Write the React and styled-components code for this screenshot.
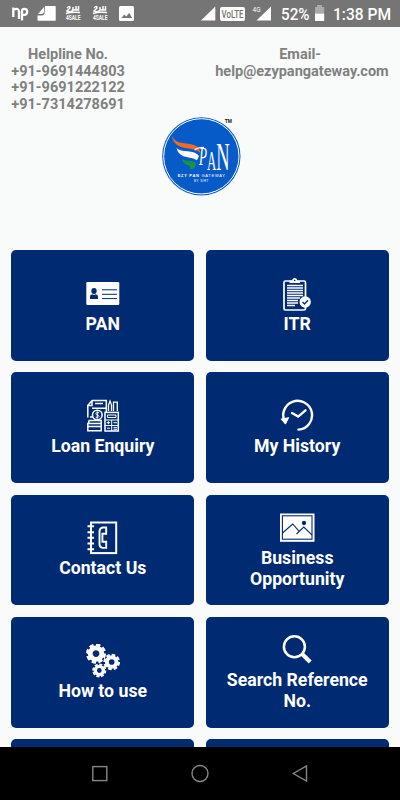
import styled, { createGlobalStyle } from 'styled-components'

const GlobalStyle = createGlobalStyle`
  * {
    box-sizing: border-box;
  }
  body {
    margin: 0;
    font-family: Roboto, sans-serif;
    background: #f9fbfa;
  }
  svg {
    display: block;
    flex: none;
  }
`

const Screen = styled.div`
  display: flex;
  flex-direction: column;
  height: 800px;
  width: 400px;
  overflow: hidden;
`

const StatusBar = styled.div`
  flex: none;
  display: flex;
  justify-content: space-between;
  height: 26.5px;
  background: #757575;
`

const Main = styled.main`
  flex: 1;
  min-height: 0;
  overflow: hidden;
  padding: 20.7px 11.3px 0;
`

const Contacts = styled.header`
  display: flex;
  justify-content: space-between;
  height: 62.8px;
`

const Contact = styled.div`
  color: #808080;
  font-size: 14.53px;
  font-weight: 700;
  line-height: 16.6px;
  text-align: center;
  white-space: nowrap;
`

const LogoWrap = styled.div`
  display: flex;
  justify-content: center;
  height: 140px;
`

const Grid = styled.div`
  display: grid;
  grid-template-columns: 1fr 1fr;
  grid-auto-rows: 110.8px;
  gap: 11.5px;
`

const Card = styled.div`
  display: flex;
  flex-direction: column;
  align-items: center;
  justify-content: center;
  border-radius: 5px;
  background: #002a72;
  color: #fff;
`

const Label = styled.div`
  max-width: 150px;
  margin: 0.8px 0 -0.8px;
  font-size: 17.7px;
  font-weight: 700;
  line-height: 21px;
  text-align: center;
`

const NavBar = styled.nav`
  flex: none;
  height: 53px;
  background: #000;
`

const Icon = ({ children }) => (
  <svg width="36" height="36" viewBox="0 0 36 36" fill="none" stroke="#fff" strokeWidth="1.3">
    {children}
  </svg>
)

const PanIcon = () => (
  <Icon>
    <rect x="1.3" y="5" width="33" height="23" rx="1.2" fill="#fff" stroke="none" />
    <g fill="#002a72" stroke="none">
      <ellipse cx="9" cy="14" rx="2.7" ry="3" />
      <path d="M5 22v-2.2q0-2.4 2.3-2.6 1.7 1.3 3.4 0 2.3.2 2.3 2.6V22z" />
    </g>
    <path d="M17 12.8h15M17 17.3h15M17 21.6h15" stroke="#002a72" strokeWidth="1" />
  </Icon>
)

const ItrIcon = () => (
  <Icon>
    <rect x="5" y="4" width="21.5" height="29" rx="1.5" strokeWidth="1.7" />
    <path d="M10.5 6V3.8h2.6q.3-2.8 2.6-2.8t2.6 2.8h2.6V6z" fill="#fff" stroke="none" />
    <circle cx="15.7" cy="3.5" r=".8" fill="#002a72" stroke="none" />
    <path d="M8 8.5h16M8 11h16M8 13.5h16M8 16h16M8 18.5h16M8 21h13M8 23.5h11M8 26h11M8 28.5h8" strokeWidth="1.4" />
    <circle cx="26.2" cy="25" r="5.7" fill="#fff" stroke="none" />
    <path d="M23.5 25l2 2 3.5-3.8" stroke="#002a72" />
  </Icon>
)

const LoanIcon = () => (
  <Icon>
    <path d="M7 1.5h14.3V13M7 1.5v5H2.8v12M7 1.5L2.8 6.5M10 4.5h8M7 9.2h14" strokeWidth="1.5" />
    <path d="M23.5 12V6l1.5-4 1.5 4v6M28.5 12V3.2h3.8V12" strokeWidth="1.3" />
    <circle cx="12.3" cy="16" r="4.8" strokeWidth="1.5" />
    <path d="M14 13.8q-3-1-3.2.8 0 1.2 1.5 1.4 1.7.2 1.7 1.5-.3 1.7-3.3.6M12.3 12.4v7.2" strokeWidth="1" />
    <path d="M3.8 21.5h12.4v3H2.8v3h13.4v-3M2.8 27.5v4.3h13.4v-4.3M5 18h3M3.8 24.5v-3" strokeWidth="1.5" />
    <rect x="20" y="13.4" width="13.3" height="18.6" strokeWidth="1.5" />
    <path d="M22.5 16h8.5v2.5h-8.5zM20 21h13M26.7 21v11M20 26.5h13M21.7 23.7h3.4M23.4 22.2v3M28.5 23.7H32M21.9 29.2h3.2M28.5 28.6H32M28.5 30.3H32" strokeWidth="1" />
  </Icon>
)

const HistoryIcon = () => (
  <Icon>
    <path d="M6.2 23.5A14.4 14.4 0 1 1 19.5 30.6" strokeWidth="2.4" strokeLinecap="round" />
    <path d="M2.4 20.2l4 4.4 3.1-5.8z" fill="#fff" strokeWidth="1.2" strokeLinejoin="round" />
    <path d="M13 14l6.2 3.6 7.3-6.3" strokeWidth="2.3" strokeLinecap="round" />
  </Icon>
)

const ContactIcon = () => (
  <Icon>
    <rect x="6" y="1.5" width="25.2" height="30.6" strokeWidth="2" />
    <path d="M2.5 5.2H9M2.5 11.2H9M2.5 16.8H9M2.5 22.5H9M2.5 28.2H9" strokeWidth="1.9" />
    <path d="M17.5 6.5h3.7v6.2h-3.8v8h3.8v6.2h-3.7q-3-.8-3-4V10.5q0-3.2 3-4z" strokeWidth="1.9" />
  </Icon>
)

const PictureIcon = () => (
  <Icon>
    <rect x="1" y="2.5" width="34.5" height="28.3" fill="#fff" stroke="none" />
    <g stroke="#002a72" strokeWidth="1.1">
      <rect x="3.4" y="4.8" width="29.6" height="23.4" />
      <path d="M3.5 22l10.2-9 6.3 7.2M17.5 23l7.3-7 8.3 8.2" />
      <circle cx="25" cy="12" r="1.6" fill="#002a72" />
    </g>
  </Icon>
)

const Gear = ({ x, y, r }) => (
  <g transform={`translate(${x} ${y})`}>
    <circle r={r * 0.58} strokeWidth={r * 0.48} />
    <circle r={r * 0.88} strokeWidth={r * 0.25} pathLength="80" strokeDasharray="6.4 3.6" />
  </g>
)

const GearsIcon = () => (
  <Icon>
    <Gear x="11" y="9.6" r={10} />
    <Gear x="26.7" y="18" r={8.3} />
    <Gear x="14.3" y="26.5" r={7} />
  </Icon>
)

const SearchIcon = () => (
  <Icon>
    <circle cx="15.4" cy="13.7" r="10.5" strokeWidth="2.5" />
    <path d="M22.6 20.5l8.6 8.4" strokeWidth="4.2" />
  </Icon>
)

const Logo = () => (
  <svg width="90" height="90" viewBox="0 0 270 270" fontFamily="Liberation Sans, sans-serif">
    <circle cx="139" cy="139" r="117.5" fill="#075bc8" />
    <circle cx="139" cy="139" r="113" fill="none" stroke="#fff" strokeWidth="3" />
    <path d="M51 78q8 19 35 22 30 3 42 10 8 7 8 18-18-12-40-13-42-6-45-37z" fill="#f36a25" />
    <path d="M64 114q10 9 33 10 24 1 35 14l-6 13q-12-8-29-9-26-4-33-28z" fill="#fff" />
    <path d="M80 147q10 6 27 6 12 1 17 6-3 18-18 20 1-12-9-14-12-3-17-18z" fill="#159447" />
    <path d="M119 120q9-8 28-8" fill="none" stroke="#fff" strokeWidth="4" />
    <g fill="#fff" fontFamily="Liberation Serif, serif">
      <text x="132" y="164" fontSize="78" fontStyle="italic" textLength="24" lengthAdjust="spacingAndGlyphs">P</text>
      <text x="156" y="179" fontSize="80" textLength="28" lengthAdjust="spacingAndGlyphs">A</text>
      <text x="184" y="179" fontSize="118" textLength="40" lengthAdjust="spacingAndGlyphs">N</text>
    </g>
    <text x="68" y="202" fontSize="12" fill="#fff" textLength="142"><tspan fontWeight="700">EZY PAN</tspan> GATEWAY</text>
    <text x="117" y="215" fontSize="9" fill="#fff" textLength="43">BY SIRT</text>
    <text x="209" y="38" fontSize="15" fontWeight="700" fill="#111" textLength="22">TM</text>
  </svg>
)

const StatusLeft = () => (
  <svg width="190" height="26" viewBox="0 0 190 26">
    <path d="M13.3 17V7.5M13.3 10q5.7-3 5.7 2v7M22 20.5v-9.3q0-2.4 2.4-2.4 2.8 0 2.8 3t-3 3H22" fill="none" stroke="#fff" strokeWidth="2.3" />
    <path d="M45 6h10q.7 0 .7.8v13.4q0 .6-.7.6H38.2q-.7 0-.7-.7V15.5H42q2 0 2.5-2z" fill="#fff" />
    <path d="M38 14l6-7v4q0 3-3 3z" fill="#fff" />
    {[66, 93].map(x => (
      <g key={x} fill="none" stroke="#fff">
        <path d={`M${x + 1} 8q3-3 3 0l-3 3q4 2 6-1V7M${x + 7} 10h3V6M${x + 10} 10h2.5V6M${x} 13.5q6-2 14-1`} strokeWidth="1.5" />
        <text x={x} y="20" fontSize="7" fontWeight="700" fill="#fff" stroke="none" textLength="14.5" lengthAdjust="spacingAndGlyphs">4SALE</text>
      </g>
    ))}
    <rect x="119" y="6" width="15" height="15" rx="1.5" fill="#fff" />
    <path d="M121.5 18l2.7-3.5 2 2 3-3.5 3 5z" fill="#757575" />
  </svg>
)

const StatusRight = () => (
  <svg width="200" height="26" viewBox="0 0 200 26" fill="#fff">
    <path d="M15.3 6.5v14H1z" />
    <rect x="20" y="7" width="25" height="14" rx="2" />
    <text x="21.5" y="18.3" fontSize="11.5" fontWeight="500" fill="#757575" textLength="22" lengthAdjust="spacingAndGlyphs">VoLTE</text>
    <text x="52.5" y="12" fontSize="6.5">4G</text>
    <path d="M71 6.5v14H56.5z" />
    <text x="81" y="19.7" fontSize="16" fontWeight="500" textLength="28.5" lengthAdjust="spacingAndGlyphs">52%</text>
    <path d="M117 5h5v2h2.2v6.5H115V7h2z" fill="#aaa" />
    <path d="M115 13.5h9.2V21H115z" />
    <text x="133" y="19.7" fontSize="16" fontWeight="500" textLength="58" lengthAdjust="spacingAndGlyphs">1:38 PM</text>
  </svg>
)

const items = [
  { label: 'PAN', icon: PanIcon },
  { label: 'ITR', icon: ItrIcon },
  { label: 'Loan Enquiry', icon: LoanIcon },
  { label: 'My History', icon: HistoryIcon },
  { label: 'Contact Us', icon: ContactIcon },
  { label: 'Business Opportunity', icon: PictureIcon },
  { label: 'How to use', icon: GearsIcon },
  { label: 'Search Reference No.', icon: SearchIcon },
]

export default function App() {
  return (
    <>
      <GlobalStyle />
      <Screen>
        <StatusBar>
          <StatusLeft />
          <StatusRight />
        </StatusBar>
        <Main>
          <Contacts>
            <Contact>
              Helpline No.<br />
              +91-9691444803<br />
              +91-9691222122<br />
              +91-7314278691
            </Contact>
            <Contact>
              Email-&nbsp;<br />
              help@ezypangateway.com
            </Contact>
          </Contacts>
          <LogoWrap>
            <Logo />
          </LogoWrap>
          <Grid>
            {items.map(({ label, icon: ItemIcon }) => (
              <Card key={label}>
                <ItemIcon />
                <Label>{label}</Label>
              </Card>
            ))}
            <Card />
            <Card />
          </Grid>
        </Main>
        <NavBar>
          <svg width="400" height="53" viewBox="0 0 400 53" fill="none" stroke="#868686" strokeWidth="1.4">
            <rect x="92.8" y="19.6" width="14" height="14" />
            <circle cx="200" cy="26.5" r="8" />
            <path d="M306.5 19v15l-13.2-7.5z" />
          </svg>
        </NavBar>
      </Screen>
    </>
  )
}
